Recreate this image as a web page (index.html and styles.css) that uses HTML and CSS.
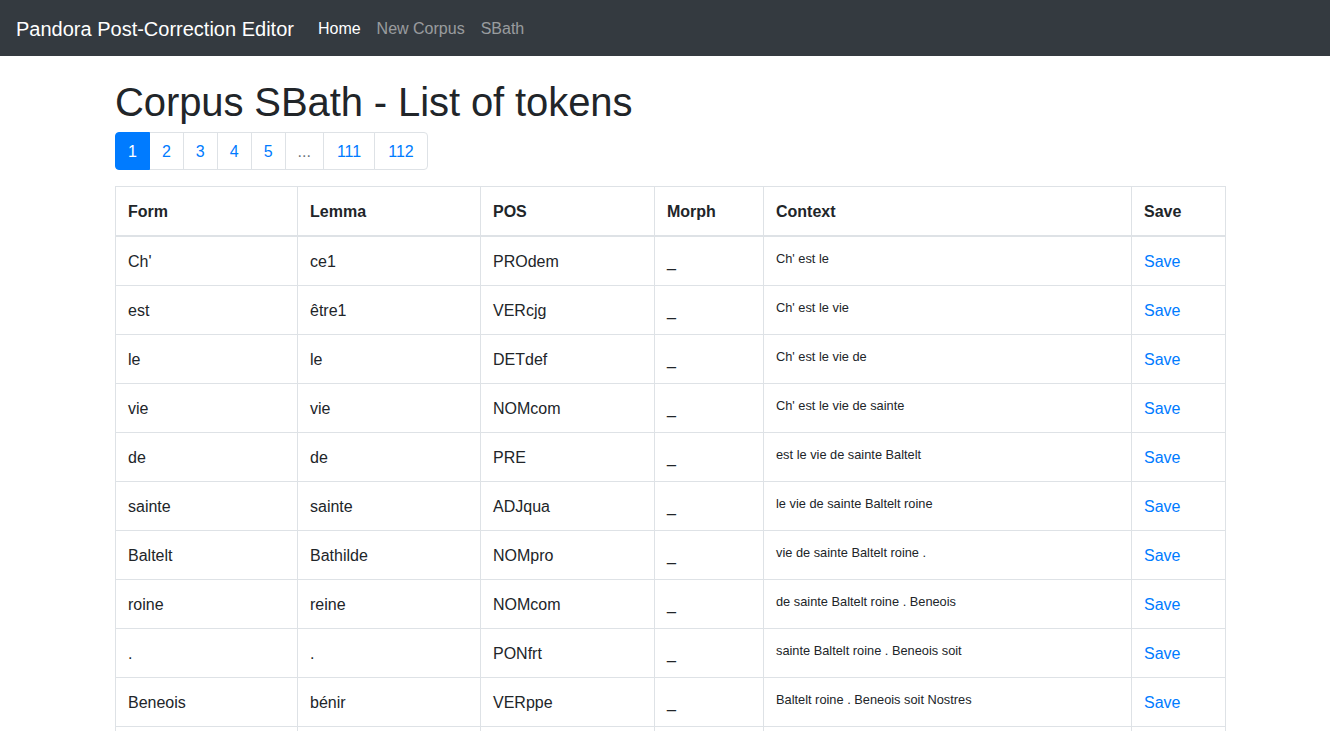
FILE: index.html
```html
<!DOCTYPE html>
<html lang="en">
<head>
<meta charset="utf-8">
<title>Pandora Post-Correction Editor</title>
<link rel="stylesheet" href="styles.css">
</head>
<body>
<nav class="navbar">
  <a class="brand" href="#">Pandora Post-Correction Editor</a>
  <ul class="nav">
    <li><a class="nav-link active" href="#">Home</a></li>
    <li><a class="nav-link" href="#">New Corpus</a></li>
    <li><a class="nav-link" href="#">SBath</a></li>
  </ul>
</nav>
<main class="container">
  <h1 class="title">Corpus SBath - List of tokens</h1>
  <ul class="pagination">
    <li class="page-item active"><a class="page-link" href="#">1</a></li>
    <li class="page-item"><a class="page-link" href="#">2</a></li>
    <li class="page-item"><a class="page-link" href="#">3</a></li>
    <li class="page-item"><a class="page-link" href="#">4</a></li>
    <li class="page-item"><a class="page-link" href="#">5</a></li>
    <li class="page-item disabled"><span class="page-link">...</span></li>
    <li class="page-item"><a class="page-link wide" href="#">111</a></li>
    <li class="page-item"><a class="page-link wide" href="#">112</a></li>
  </ul>
  <table class="table">
    <colgroup>
      <col class="c-form"><col class="c-lemma"><col class="c-pos"><col class="c-morph"><col class="c-context"><col class="c-save">
    </colgroup>
    <thead>
      <tr><th>Form</th><th>Lemma</th><th>POS</th><th>Morph</th><th>Context</th><th>Save</th></tr>
    </thead>
    <tbody>
      <tr><td>Ch'</td><td>ce1</td><td>PROdem</td><td>_</td><td><div class="context">Ch' est le</div></td><td><a class="save" href="#">Save</a></td></tr>
      <tr><td>est</td><td>être1</td><td>VERcjg</td><td>_</td><td><div class="context">Ch' est le vie</div></td><td><a class="save" href="#">Save</a></td></tr>
      <tr><td>le</td><td>le</td><td>DETdef</td><td>_</td><td><div class="context">Ch' est le vie de</div></td><td><a class="save" href="#">Save</a></td></tr>
      <tr><td>vie</td><td>vie</td><td>NOMcom</td><td>_</td><td><div class="context">Ch' est le vie de sainte</div></td><td><a class="save" href="#">Save</a></td></tr>
      <tr><td>de</td><td>de</td><td>PRE</td><td>_</td><td><div class="context">est le vie de sainte Baltelt</div></td><td><a class="save" href="#">Save</a></td></tr>
      <tr><td>sainte</td><td>sainte</td><td>ADJqua</td><td>_</td><td><div class="context">le vie de sainte Baltelt roine</div></td><td><a class="save" href="#">Save</a></td></tr>
      <tr><td>Baltelt</td><td>Bathilde</td><td>NOMpro</td><td>_</td><td><div class="context">vie de sainte Baltelt roine .</div></td><td><a class="save" href="#">Save</a></td></tr>
      <tr><td>roine</td><td>reine</td><td>NOMcom</td><td>_</td><td><div class="context">de sainte Baltelt roine . Beneois</div></td><td><a class="save" href="#">Save</a></td></tr>
      <tr><td>.</td><td>.</td><td>PONfrt</td><td>_</td><td><div class="context">sainte Baltelt roine . Beneois soit</div></td><td><a class="save" href="#">Save</a></td></tr>
      <tr><td>Beneois</td><td>bénir</td><td>VERppe</td><td>_</td><td><div class="context">Baltelt roine . Beneois soit Nostres</div></td><td><a class="save" href="#">Save</a></td></tr>
      <tr><td>soit</td><td>être1</td><td>VERcjg</td><td>_</td><td><div class="context">roine . Beneois soit Nostres Sires</div></td><td><a class="save" href="#">Save</a></td></tr>
      <tr><td>Nostres</td><td>notre</td><td>DETpos</td><td>_</td><td><div class="context">. Beneois soit Nostres Sires ,</div></td><td><a class="save" href="#">Save</a></td></tr>
    </tbody>
  </table>
</main>
</body>
</html>
```
FILE: styles.css
```css
* { box-sizing: border-box; }

html, body {
  margin: 0;
  padding: 0;
}

body {
  font-family: "Liberation Sans", Arial, sans-serif;
  font-size: 16px;
  line-height: 1.5;
  color: #212529;
  background: #fff;
}

a { text-decoration: none; }

.navbar {
  display: flex;
  align-items: center;
  height: 56px;
  padding: 8px 16px;
  background: #343a40;
}

.brand {
  font-size: 20px;
  line-height: 30px;
  color: #fff;
  margin-right: 16px;
  padding: 6px 0 4px;
}

.nav {
  display: flex;
  list-style: none;
  margin: 0;
  padding: 0;
}

.nav-link {
  display: block;
  padding: 9px 8px 7px;
  color: rgba(255, 255, 255, 0.5);
}

.nav-link.active { color: #fff; }

.container {
  width: 1110px;
  margin-left: 115px;
  padding-top: 20px;
}

.title {
  margin: 0 0 6px;
  padding-top: 2px;
  font-size: 40px;
  font-weight: 500;
  line-height: 1.2;
  letter-spacing: -0.1px;
}

.pagination {
  display: flex;
  list-style: none;
  padding: 0;
  margin: 0 0 16px;
}

.page-link {
  display: block;
  padding: 9px 12px 7px;
  line-height: 20px;
  margin-left: -1px;
  color: #007bff;
  background: #fff;
  border: 1px solid #dee2e6;
}

.page-link.wide {
  padding-left: 13px;
  padding-right: 13px;
}

.page-item:first-child .page-link {
  margin-left: 0;
  border-top-left-radius: 4px;
  border-bottom-left-radius: 4px;
}

.page-item:last-child .page-link {
  border-top-right-radius: 4px;
  border-bottom-right-radius: 4px;
}

.page-item.active .page-link {
  color: #fff;
  background: #007bff;
  border-color: #007bff;
  position: relative;
  z-index: 1;
}

.page-item.disabled .page-link { color: #6c757d; }

.table {
  width: 1110px;
  table-layout: fixed;
  border-collapse: collapse;
  margin-bottom: 16px;
}

.c-form { width: 182px; }
.c-lemma { width: 183px; }
.c-pos { width: 174px; }
.c-morph { width: 109px; }
.c-context { width: 368px; }
.c-save { width: 94px; }

.table th,
.table td {
  padding: 13px 12px 11px;
  border: 1px solid #dee2e6;
  vertical-align: top;
  text-align: left;
}

.table thead th {
  font-weight: 700;
  border-bottom: 2px solid #dee2e6;
}

.context {
  font-size: 12.8px;
  line-height: 17.2px;
}

.save { color: #007bff; }
```
